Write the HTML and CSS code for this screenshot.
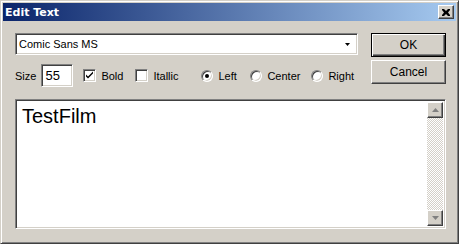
FILE: index.html
```html
<!DOCTYPE html>
<html lang="en">
<head>
    <meta charset="UTF-8">
    <title>Edit Text</title>
    <link rel="stylesheet" href="styles.css">
</head>
<body>

<div class="window">
    <div class="titlebar">
        <span class="title">Edit Text</span>
        <span class="close-btn">
            <svg width="8" height="7" viewBox="0 0 8 7"><path d="M0 0h2l2 2 2-2h2v1l-2 2.5 2 2.5v1h-2l-2-2-2 2h-2v-1l2-2.5-2-2.5z" fill="#000"/></svg>
        </span>
    </div>

    <div class="content">
        <div class="top">
            <div class="left">
                <div class="combo">
                    <span class="combo-text">Comic Sans MS</span>
                    <span class="combo-arrow">
                        <svg width="5" height="3" viewBox="0 0 5 3"><path d="M0 0h5l-2.5 3z" fill="#000"/></svg>
                    </span>
                </div>
                <div class="options">
                    <span class="lbl">Size</span>
                    <span class="size-input">55</span>
                    <span class="opt opt-bold">
                        <span class="check">
                            <svg width="9" height="9" viewBox="0 0 9 9"><path d="M1 3.5l2 2 5-5v2l-5 5-2-2z" fill="#000"/></svg>
                        </span>
                        <span class="lbl">Bold</span>
                    </span>
                    <span class="opt opt-italic">
                        <span class="check"></span>
                        <span class="lbl">Itallic</span>
                    </span>
                    <span class="opt opt-left">
                        <span class="radio"><span class="dot"></span></span>
                        <span class="lbl">Left</span>
                    </span>
                    <span class="opt opt-center">
                        <span class="radio"></span>
                        <span class="lbl">Center</span>
                    </span>
                    <span class="opt">
                        <span class="radio"></span>
                        <span class="lbl">Right</span>
                    </span>
                </div>
            </div>
            <div class="right">
                <button class="btn default">OK</button>
                <button class="btn">Cancel</button>
            </div>
        </div>

        <div class="editor">
            <div class="editor-text">TestFilm</div>
            <div class="scrollbar">
                <span class="sb-btn">
                    <svg width="7" height="4" viewBox="0 0 7 4"><path d="M3.5 0l3.5 4h-7z"/></svg>
                </span>
                <span class="sb-track"></span>
                <span class="sb-btn">
                    <svg width="7" height="4" viewBox="0 0 7 4"><path d="M0 0h7l-3.5 4z"/></svg>
                </span>
            </div>
        </div>
    </div>
</div>

</body>
</html>
```

FILE: styles.css
```css
body {
    margin: 0;
    font-family: "Liberation Sans", Arial, sans-serif;
    font-size: 11px;
    color: #000;
    background: #d4d0c8;
}

.window {
    width: 459px;
    height: 244px;
    box-sizing: border-box;
    background: #d4d0c8;
    border-top: 1px solid #d4d0c8;
    border-left: 1px solid #d4d0c8;
    border-right: 1px solid #404040;
    border-bottom: 1px solid #404040;
    box-shadow: inset 1px 1px 0 #fff, inset -1px -1px 0 #808080;
    padding: 2px;
}

.titlebar {
    height: 18px;
    background: linear-gradient(to right, #0a246a, #a6caf0);
    display: flex;
    align-items: center;
    justify-content: space-between;
    padding: 0 2px 0 2px;
}

.title {
    color: #fff;
    font-weight: bold;
    font-size: 11px;
    font-family: "DejaVu Sans", sans-serif;
}

.close-btn {
    width: 16px;
    height: 14px;
    box-sizing: border-box;
    background: #d4d0c8;
    border-top: 1px solid #fff;
    border-left: 1px solid #fff;
    border-right: 1px solid #404040;
    border-bottom: 1px solid #404040;
    box-shadow: inset -1px -1px 0 #808080;
    display: flex;
    align-items: center;
    justify-content: center;
}

.content {
    padding: 12px 9px 0 12px;
}

.top {
    display: flex;
    gap: 13px;
}

.left {
    width: 343px;
}

.combo {
    height: 22px;
    box-sizing: border-box;
    background: #fff;
    border-top: 1px solid #808080;
    border-left: 1px solid #808080;
    border-right: 1px solid #fff;
    border-bottom: 1px solid #fff;
    box-shadow: inset 1px 1px 0 #404040, inset -1px -1px 0 #d4d0c8;
    display: flex;
    align-items: center;
    justify-content: space-between;
    padding: 0 2px 0 3px;
}

.combo-arrow {
    width: 16px;
    height: 18px;
    background: #fff;
    display: flex;
    align-items: center;
    justify-content: center;
}

.options {
    display: flex;
    align-items: center;
    margin-top: 9px;
    height: 23px;
}

.lbl {
    white-space: nowrap;
}

.size-input {
    flex: none;
    width: 32px;
    height: 23px;
    box-sizing: border-box;
    margin-left: 5px;
    margin-right: 10px;
    background: #fff;
    border-top: 1px solid #808080;
    border-left: 1px solid #808080;
    border-right: 1px solid #fff;
    border-bottom: 1px solid #fff;
    box-shadow: inset 1px 1px 0 #404040, inset -1px -1px 0 #d4d0c8;
    padding: 3px 0 0 3px;
    font-size: 13px;
}

.opt {
    flex: none;
    display: flex;
    align-items: center;
    gap: 5px;
}

.opt-bold {
    width: 52px;
}

.opt-italic {
    width: 66px;
}

.opt-left {
    width: 49px;
}

.opt-center {
    width: 61px;
}

.check {
    width: 13px;
    height: 13px;
    box-sizing: border-box;
    background: #fff;
    border-top: 1px solid #808080;
    border-left: 1px solid #808080;
    border-right: 1px solid #fff;
    border-bottom: 1px solid #fff;
    box-shadow: inset 1px 1px 0 #404040, inset -1px -1px 0 #d4d0c8;
    display: flex;
    align-items: center;
    justify-content: center;
    flex: none;
}

.radio {
    width: 12px;
    height: 12px;
    box-sizing: border-box;
    border-radius: 50%;
    background: #fff;
    border: 1px solid;
    border-color: #808080 #fff #fff #808080;
    box-shadow: inset 1px 1px 0 #404040, inset -1px -1px 0 #d4d0c8;
    display: flex;
    align-items: center;
    justify-content: center;
    flex: none;
}

.dot {
    width: 4px;
    height: 4px;
    border-radius: 50%;
    background: #000;
}

.right {
    display: flex;
    flex-direction: column;
    gap: 3px;
}

.btn {
    width: 75px;
    height: 24px;
    box-sizing: border-box;
    font-family: "Liberation Sans", Arial, sans-serif;
    font-size: 12px;
    color: #000;
    background: #d4d0c8;
    border-top: 1px solid #fff;
    border-left: 1px solid #fff;
    border-right: 1px solid #404040;
    border-bottom: 1px solid #404040;
    box-shadow: inset -1px -1px 0 #808080;
    padding: 0;
}

.btn.default {
    border: 1px solid #000;
    box-shadow: inset 1px 1px 0 #fff, inset -1px -1px 0 #404040, inset -2px -2px 0 #808080;
}

.editor {
    margin-top: 12px;
    width: 431px;
    height: 130px;
    box-sizing: border-box;
    background: #fff;
    border-top: 1px solid #808080;
    border-left: 1px solid #808080;
    border-right: 1px solid #fff;
    border-bottom: 1px solid #fff;
    box-shadow: inset 1px 1px 0 #404040, inset -1px -1px 0 #d4d0c8;
    display: flex;
    padding: 2px;
}

.editor-text {
    flex: 1;
    font-size: 20px;
    padding: 2px 0 0 4px;
    line-height: 24px;
}

.scrollbar {
    width: 16px;
    display: flex;
    flex-direction: column;
}

.sb-btn {
    height: 16px;
    box-sizing: border-box;
    background: #d4d0c8;
    border-top: 1px solid #fff;
    border-left: 1px solid #fff;
    border-right: 1px solid #404040;
    border-bottom: 1px solid #404040;
    box-shadow: inset -1px -1px 0 #808080;
    display: flex;
    align-items: center;
    justify-content: center;
}

.sb-btn svg path {
    fill: #808080;
}

.sb-track {
    flex: 1;
    background: repeating-conic-gradient(#fff 0 25%, #d4d0c8 0 50%) 0 0 / 2px 2px;
}
```
